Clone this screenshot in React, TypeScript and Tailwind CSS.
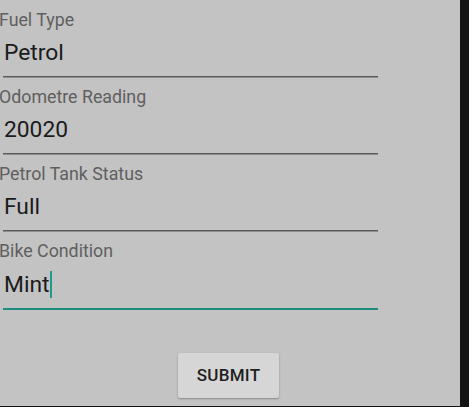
import React from "react";

const fields = [
  { label: "Fuel Type", value: "Petrol" },
  { label: "Odometre Reading", value: "20020" },
  { label: "Petrol Tank Status", value: "Full" },
  { label: "Bike Condition", value: "Mint", focused: true },
];

export default function App() {
  return (
    <div
      className="flex w-[469px] h-[407px] overflow-hidden bg-[#141414]"
      style={{ fontFamily: "Roboto, 'Noto Sans', sans-serif" }}
    >
      <div className="flex flex-col w-[460px] h-[406px] bg-[#c3c3c3]">
        <div className="flex flex-col pt-[10px] pl-[3px] w-[378px]">
          {fields.map((f, i) => (
            <div key={f.label} className={`flex flex-col ${i > 0 ? "mt-[9px]" : ""}`}>
              <div className="-ml-[4px] text-[17.8px] leading-[20px] text-[#5f5f5f]">{f.label}</div>
              <div className="mt-[10px] pl-[1px] text-[22.8px] leading-[26px] text-[#1b1b1b] flex items-center">
                <span>{f.value}</span>
                {f.focused && <span className="inline-block w-[2px] h-[27px] bg-[#1f9a8d]" />}
              </div>
              {f.focused ? (
                <div className="mt-[10px] h-[2px] bg-[#1e8c80]" />
              ) : (
                <div className="mt-[10px] flex flex-col">
                  <div className="h-px bg-[#5a5a5a]" />
                  <div className="h-px bg-[#8e8e8e]" />
                </div>
              )}
            </div>
          ))}
        </div>
        <div className="flex justify-center w-[457px] mt-[43px]">
          <button className="w-[101px] h-[45px] rounded-[2px] bg-[#d6d6d6] shadow-[0_1px_2px_rgba(0,0,0,0.3)] text-[17px] font-medium text-[#1e1e1e] tracking-[0.3px]">
            SUBMIT
          </button>
        </div>
      </div>
    </div>
  );
}
